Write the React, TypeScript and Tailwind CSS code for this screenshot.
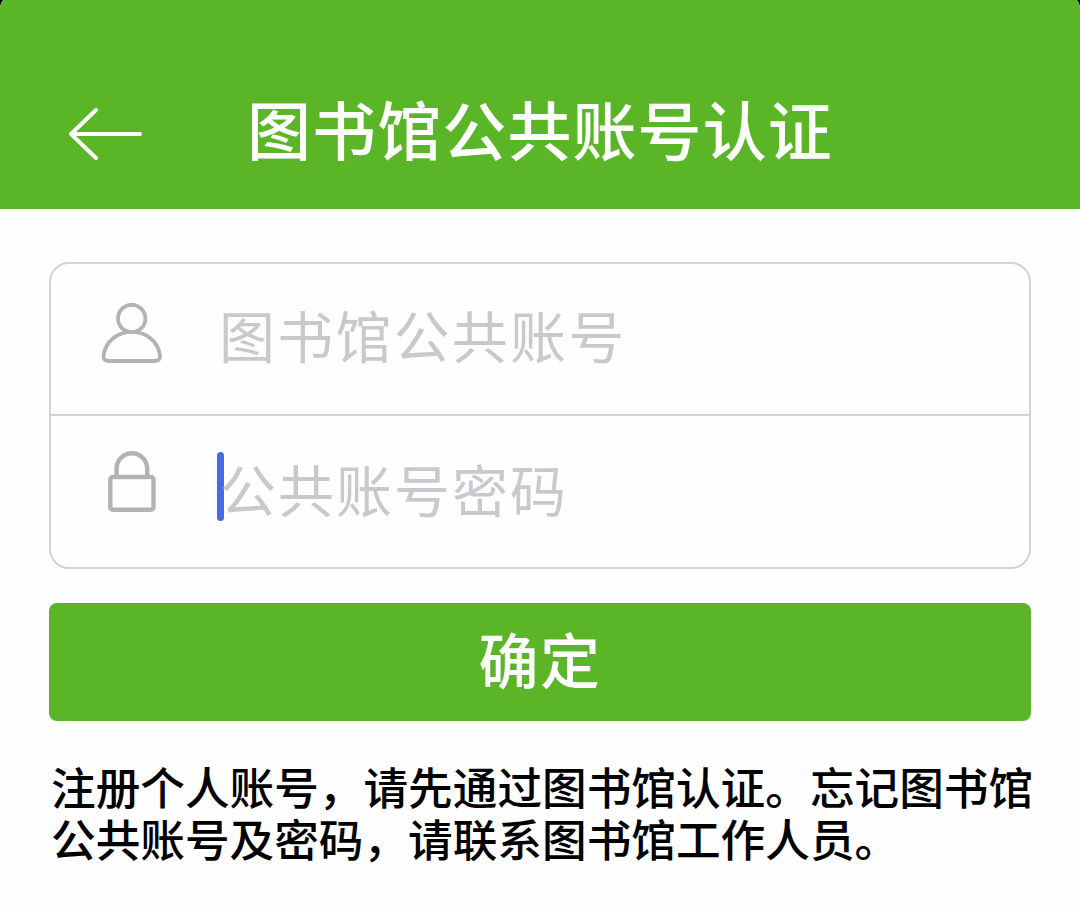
import React, { useState } from 'react';

const FONT = "font-['Noto_Sans_CJK_SC','Noto_Sans',sans-serif]";

const BackIcon = () => (
  <svg width="74" height="54" viewBox="0 0 74 54" fill="none" stroke="currentColor" strokeWidth="4" strokeLinecap="round" strokeLinejoin="round">
    <path d="M28 3 L3 27 L28 51 M3 27 H72" />
  </svg>
);

const UserIcon = () => (
  <svg width="64" height="62" viewBox="0 0 64 62" fill="none" stroke="currentColor" strokeWidth="3.8" strokeLinejoin="round">
    <circle cx="31.700" cy="15.500" r="13.700" />
    <path d="M9 58 H54.500 Q60.500 58 60 52.500 C58 38 46 28.900 31.700 28.900 C18 28.900 5.500 38 3.500 52.500 Q3 58 9 58 Z" />
  </svg>
);

const LockIcon = () => (
  <svg width="50" height="62" viewBox="0 0 50 62" fill="none" stroke="currentColor" strokeWidth="4.4">
    <rect x="3.300" y="26" width="43.200" height="32.800" rx="2.500" />
    <path d="M9.600 26 V17.500 A15.300 15.300 0 0 1 40.200 17.500 V26" />
  </svg>
);

const App: React.FC = () => {
  const [account, setAccount] = useState('');
  const [password, setPassword] = useState('');

  return (
    <div className="bg-black">
      <div className={`flex flex-col w-[1080px] h-[912px] overflow-hidden rounded-[4px_4px_0_0/10px_10px_0_0] bg-[#fefefe] ${FONT}`}>
        <header className="flex items-start h-[209px] shrink-0 bg-[#5ab527] text-white">
          <button type="button" aria-label="返回" className="ml-[68px] mt-[107px]">
            <BackIcon />
          </button>
          <h1 className="ml-[105px] mt-[79px] text-[64px] leading-[96px] tracking-[1.1px] font-medium whitespace-nowrap">图书馆公共账号认证</h1>
        </header>

        <form className="flex flex-col px-[49px] pt-[53px]" onSubmit={e => e.preventDefault()}>
          <div className="h-[307px] rounded-[20px] border-2 border-[#d5d1d9]">
            <label className="flex h-[152px] items-center border-b-2 border-[#decfe0] text-[#b4b2b5]">
              <span className="flex w-[168px] shrink-0 justify-center pb-[10px] pr-[7px]">
                <UserIcon />
              </span>
              <input
                type="text"
                value={account}
                onChange={e => setAccount(e.target.value)}
                placeholder="图书馆公共账号"
                className="mb-[11px] w-[760px] h-[90px] text-[56px] tracking-[2.2px] font-normal text-black outline-none placeholder:text-[#cbc8cd]"
              />
            </label>
            <label className="flex h-[151px] items-center text-[#b4b2b5]">
              <span className="flex w-[166px] shrink-0 justify-center pb-[20px] pr-[5px]">
                <LockIcon />
              </span>
              <span className="mb-[10px] h-[69px] w-[7px] shrink-0 rounded-full bg-[#476ee0]" />
              <input
                type="password"
                value={password}
                onChange={e => setPassword(e.target.value)}
                placeholder="公共账号密码"
                className="-ml-[4px] mb-[9px] w-[760px] h-[90px] text-[56px] tracking-[2px] font-normal text-black outline-none placeholder:text-[#cbc8cd]"
              />
            </label>
          </div>

          <button type="submit" className="mt-[34px] h-[118px] rounded-[8px] bg-[#5ab527] pb-[9px] text-[60px] leading-[109px] tracking-[1.5px] font-medium text-white">
            确定
          </button>
        </form>

        <p className="ml-[51px] mt-[39px] text-[44.65px] leading-[52px] font-medium whitespace-nowrap text-black">
          注册个人账号，请先通过图书馆认证。忘记图书馆
          <br />
          公共账号及密码，请联系图书馆工作人员。
        </p>
      </div>
    </div>
  );
};

export default App;
